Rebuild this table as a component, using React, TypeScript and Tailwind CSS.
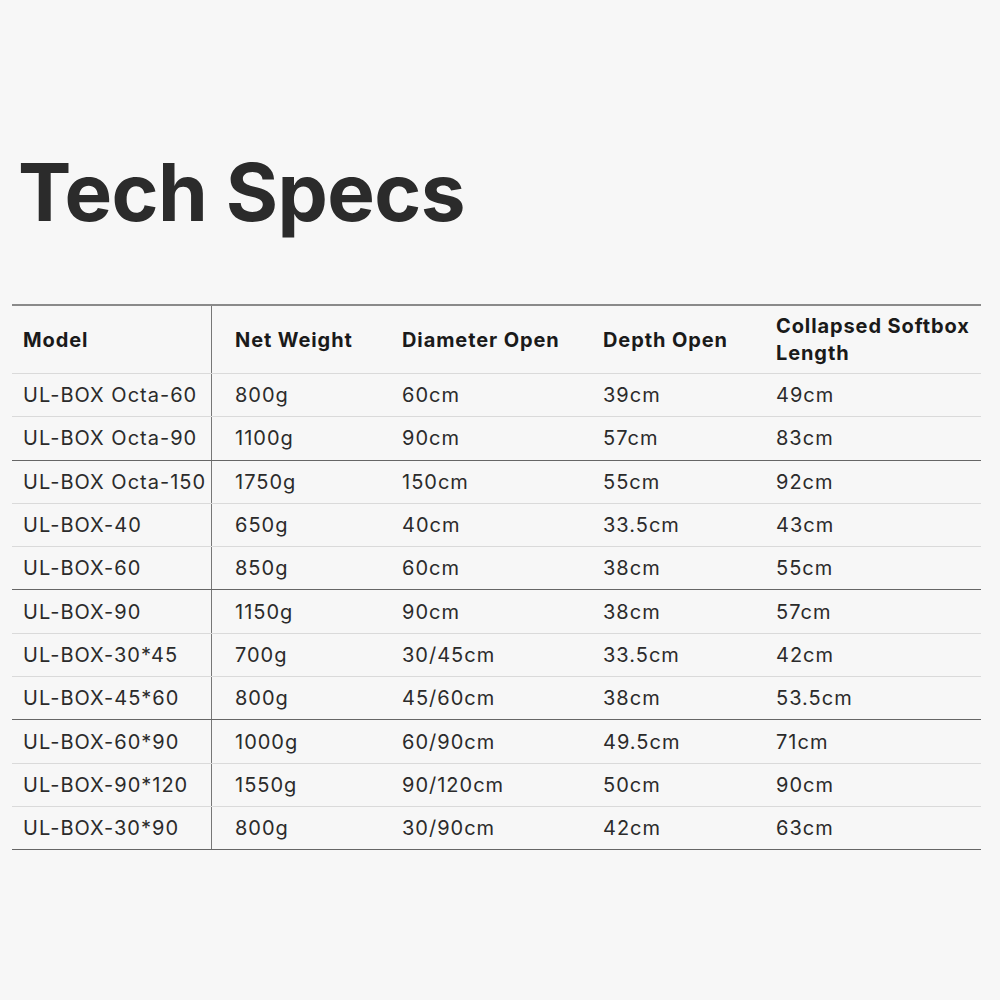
import React from 'react';

type Row = { model: string; weight: string; diameter: string; depth: string; collapsed: string; strong?: boolean };

// strong = darker rule under the row (groups of three)
const rows: Row[] = [
  { model: 'UL-BOX Octa-60', weight: '800g', diameter: '60cm', depth: '39cm', collapsed: '49cm' },
  { model: 'UL-BOX Octa-90', weight: '1100g', diameter: '90cm', depth: '57cm', collapsed: '83cm', strong: true },
  { model: 'UL-BOX Octa-150', weight: '1750g', diameter: '150cm', depth: '55cm', collapsed: '92cm' },
  { model: 'UL-BOX-40', weight: '650g', diameter: '40cm', depth: '33.5cm', collapsed: '43cm' },
  { model: 'UL-BOX-60', weight: '850g', diameter: '60cm', depth: '38cm', collapsed: '55cm', strong: true },
  { model: 'UL-BOX-90', weight: '1150g', diameter: '90cm', depth: '38cm', collapsed: '57cm' },
  { model: 'UL-BOX-30*45', weight: '700g', diameter: '30/45cm', depth: '33.5cm', collapsed: '42cm' },
  { model: 'UL-BOX-45*60', weight: '800g', diameter: '45/60cm', depth: '38cm', collapsed: '53.5cm', strong: true },
  { model: 'UL-BOX-60*90', weight: '1000g', diameter: '60/90cm', depth: '49.5cm', collapsed: '71cm' },
  { model: 'UL-BOX-90*120', weight: '1550g', diameter: '90/120cm', depth: '50cm', collapsed: '90cm' },
  { model: 'UL-BOX-30*90', weight: '800g', diameter: '30/90cm', depth: '42cm', collapsed: '63cm', strong: true },
];

const font = { fontFamily: 'Inter, "Noto Sans", sans-serif' };

export default function App() {
  return (
    <div className="min-h-screen w-[1000px] bg-[#f7f7f7] text-[#2b2b2b]" style={font}>
      <div className="pt-[142px] pl-[18px]">
        <h1 className="text-[80px] font-bold leading-[100px] tracking-[-0.6px]">Tech Specs</h1>
      </div>

      <div className="mt-[62px] ml-[12px] w-[969px] border-t-2 border-[#8a8a8a]">
        <div className="flex h-[68px] items-center border-b border-[#dadada] text-[20px] font-bold tracking-[0.9px] text-[#1a1a1a]">
          <div className="flex h-full w-[200px] items-center border-r border-[#777] pl-[11px]">Model</div>
          <div className="w-[190px] pl-[23px]">Net Weight</div>
          <div className="w-[201px]">Diameter Open</div>
          <div className="w-[173px]">Depth Open</div>
          <div className="w-[205px] whitespace-nowrap leading-[27px]">
            Collapsed Softbox
            <br />
            Length
          </div>
        </div>

        {rows.map((r) => (
          <div
            key={r.model}
            className={
              'flex h-[43.3px] items-center text-[20px] tracking-[1px] ' +
              (r.strong ? 'border-b border-[#666]' : 'border-b border-[#dadada]')
            }
          >
            <div className="flex h-full w-[200px] items-center border-r border-[#777] pl-[11px]">{r.model}</div>
            <div className="w-[190px] pl-[23px]">{r.weight}</div>
            <div className="w-[201px]">{r.diameter}</div>
            <div className="w-[173px]">{r.depth}</div>
            <div className="w-[205px]">{r.collapsed}</div>
          </div>
        ))}
      </div>
    </div>
  );
}
